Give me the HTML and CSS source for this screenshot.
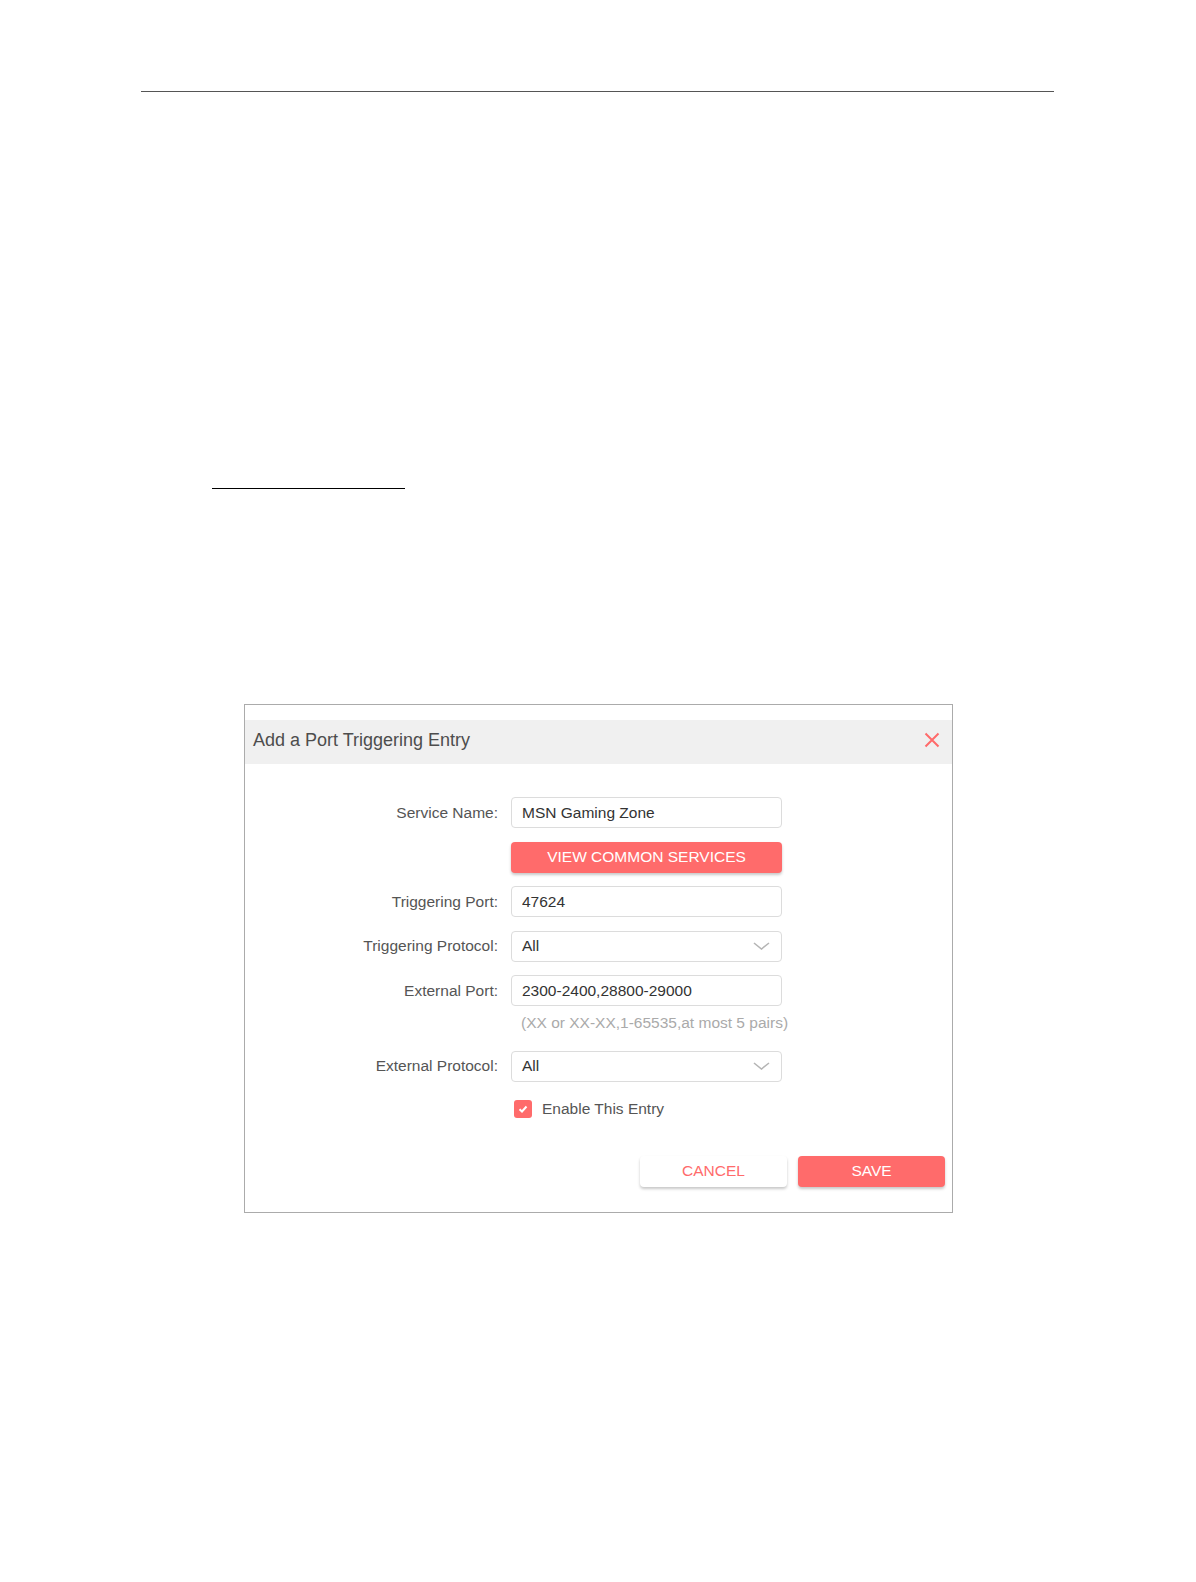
FILE: index.html
```html
<!DOCTYPE html>
<html lang="en">
<head>
    <meta charset="UTF-8">
    <meta name="viewport" content="width=device-width, initial-scale=1.0">
    <title>Port Triggering - Add Entry</title>
    <link rel="stylesheet" href="styles.css">
</head>
<body>
    <div class="page">
        <hr class="page-rule">
        <div class="section-link"></div>

        <div class="dialog">
            <div class="dialog-header">
                <h2 class="dialog-title">Add a Port Triggering Entry</h2>
                <button class="close-button" type="button" aria-label="Close">
                    <svg width="16" height="16" viewBox="0 0 16 16">
                        <path d="M1.5 1.5 L14.5 14.5 M14.5 1.5 L1.5 14.5" stroke="#ff6b6b" stroke-width="2" fill="none"/>
                    </svg>
                </button>
            </div>

            <form class="dialog-body">
                <div class="form-row">
                    <label for="servico">Service Name:</label>
                    <input type="text" id="servico" class="field" value="MSN Gaming Zone">
                </div>

                <div class="form-row">
                    <span class="label-spacer"></span>
                    <button type="button" class="primary-button wide">VIEW COMMON SERVICES</button>
                </div>

                <div class="form-row">
                    <label for="portaDisparo">Triggering Port:</label>
                    <input type="text" id="portaDisparo" class="field" value="47624">
                </div>

                <div class="form-row">
                    <label>Triggering Protocol:</label>
                    <div class="field select-field">
                        <span>All</span>
                        <svg width="17" height="8" viewBox="0 0 17 8">
                            <polyline points="1,1 8.5,7 16,1" stroke="#b5b5b5" stroke-width="1.6" fill="none"/>
                        </svg>
                    </div>
                </div>

                <div class="form-row">
                    <label for="portaExterna">External Port:</label>
                    <input type="text" id="portaExterna" class="field" value="2300-2400,28800-29000">
                </div>

                <div class="form-row hint-row">
                    <span class="label-spacer"></span>
                    <span class="hint">(XX or XX-XX,1-65535,at most 5 pairs)</span>
                </div>

                <div class="form-row">
                    <label>External Protocol:</label>
                    <div class="field select-field">
                        <span>All</span>
                        <svg width="17" height="8" viewBox="0 0 17 8">
                            <polyline points="1,1 8.5,7 16,1" stroke="#b5b5b5" stroke-width="1.6" fill="none"/>
                        </svg>
                    </div>
                </div>

                <div class="form-row check-row">
                    <span class="label-spacer"></span>
                    <label class="checkbox">
                        <span class="check-box">
                            <svg width="12" height="12" viewBox="0 0 12 12">
                                <polyline points="2.5,6.2 5,8.5 9.5,3.5" stroke="#fff" stroke-width="2" fill="none"/>
                            </svg>
                        </span>
                        Enable This Entry
                    </label>
                </div>

                <div class="dialog-actions">
                    <button type="button" class="secondary-button">CANCEL</button>
                    <button type="submit" class="primary-button">SAVE</button>
                </div>
            </form>
        </div>
    </div>
</body>
</html>
```

FILE: styles.css
```css
:root {
    --vermelho: #ff6b6b;
    --cinza-titulo: #4d4d4d;
    --cinza-texto: #555;
    --cinza-campo: #333;
    --cinza-dica: #aaa;
    --borda-campo: #dcdcdc;
    --borda-dialogo: #ababab;
    --fundo-cabecalho: #f0f0f0;
    --sombra-botao: rgba(0, 0, 0, 0.22);
}

body {
    margin: 0;
    background: #fff;
    font-family: 'Liberation Sans', Arial, sans-serif;
    font-size: 15.5px;
    color: var(--cinza-texto);
}

.page {
    padding-top: 91px;
    padding-bottom: 370px;
}

.page-rule {
    margin: 0 0 0 141px;
    width: 913px;
    border: 0;
    border-top: 1px solid #555;
    height: 0;
}

.section-link {
    margin: 396px 0 0 212px;
    width: 193px;
    border-top: 1px solid #000;
}

/* dialog */
.dialog {
    margin: 215px 0 0 244px;
    width: 707px;
    border: 1px solid var(--borda-dialogo);
    padding-top: 15px;
    padding-bottom: 25px;
    background: #fff;
}

.dialog-header {
    box-sizing: border-box;
    display: flex;
    align-items: center;
    justify-content: space-between;
    height: 44px;
    padding: 0 12px 4px 8px;
    background: var(--fundo-cabecalho);
}

.dialog-title {
    margin: 0;
    font-size: 18px;
    font-weight: normal;
    color: var(--cinza-titulo);
}

.close-button {
    border: 0;
    background: none;
    padding: 0;
    width: 16px;
    height: 16px;
    display: flex;
    cursor: pointer;
}

.dialog-body {
    padding-top: 33px;
}

.form-row {
    display: flex;
    align-items: center;
    margin-bottom: 13.5px;
}

.form-row label,
.label-spacer {
    width: 253px;
    padding-right: 13px;
    text-align: right;
    flex-shrink: 0;
}

.field {
    box-sizing: border-box;
    width: 271px;
    height: 31px;
    border: 1px solid var(--borda-campo);
    border-radius: 4px;
    padding: 0 10px;
    font-family: inherit;
    font-size: 15.5px;
    color: var(--cinza-campo);
    background: #fff;
}

.select-field {
    display: flex;
    align-items: center;
    justify-content: space-between;
    padding-right: 11px;
}

.primary-button,
.secondary-button {
    height: 31px;
    border: 0;
    border-radius: 4px;
    font-family: inherit;
    font-size: 15.5px;
    cursor: pointer;
    box-shadow: 0 2px 3px var(--sombra-botao);
}

.primary-button {
    background: var(--vermelho);
    color: #fff;
}

.primary-button.wide {
    width: 271px;
}

.secondary-button {
    background: #fff;
    color: var(--vermelho);
}

.hint-row {
    margin-top: -7px;
    margin-bottom: 18px;
    height: 20px;
}

.hint {
    padding-left: 10px;
    color: var(--cinza-dica);
}

.check-row {
    margin-top: 18px;
    margin-bottom: 0;
    height: 18px;
}

.form-row .checkbox {
    width: auto;
    padding: 0 0 0 3px;
    display: flex;
    align-items: center;
    gap: 10px;
    text-align: left;
}

.check-box {
    width: 18px;
    height: 18px;
    border-radius: 3px;
    background: var(--vermelho);
    display: flex;
    align-items: center;
    justify-content: center;
}

.dialog-actions {
    display: flex;
    justify-content: flex-end;
    gap: 11px;
    margin-top: 38px;
    padding-right: 7px;
}

.dialog-actions button {
    width: 147px;
}
```
